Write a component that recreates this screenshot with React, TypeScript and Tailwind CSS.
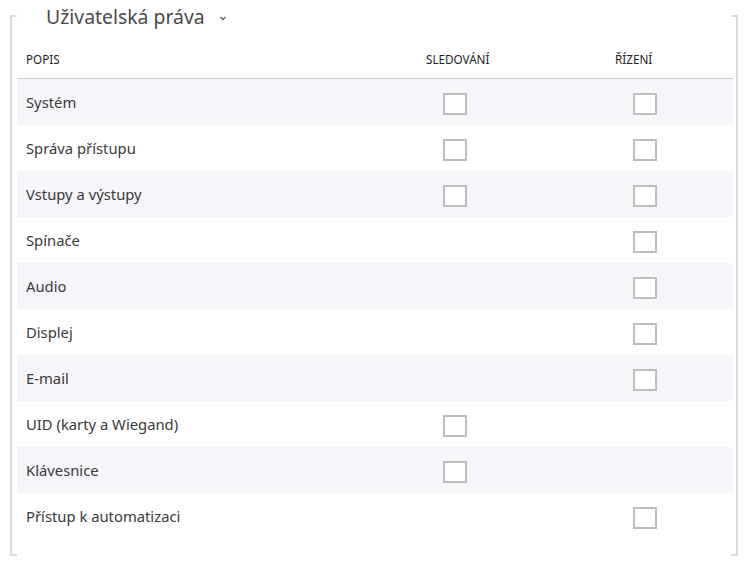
const rows = [
  { label: 'Systém', watch: true, control: true },
  { label: 'Správa přístupu', watch: true, control: true },
  { label: 'Vstupy a výstupy', watch: true, control: true },
  { label: 'Spínače', watch: false, control: true },
  { label: 'Audio', watch: false, control: true },
  { label: 'Displej', watch: false, control: true },
  { label: 'E-mail', watch: false, control: true },
  { label: 'UID (karty a Wiegand)', watch: true, control: false },
  { label: 'Klávesnice', watch: true, control: false },
  { label: 'Přístup k automatizaci', watch: false, control: true },
];

const Box = () => (
  <span className="block w-[24px] h-[22px] border-2 border-[#bdbdbd] bg-white" />
);

export default function App() {
  return (
    <div className="w-[748px] h-[569px] bg-white px-[10px] pt-[15px] font-['Noto_Sans','Open_Sans',sans-serif] text-[#3a3a3a]">
      <div className="relative flow-root h-[541px] w-[728px] border-x-2 border-[#dcdcdc]">
        {/* corner ticks */}
        <div className="absolute -left-[2px] top-0 w-[7px] h-[2px] bg-[#dcdcdc]" />
        <div className="absolute -right-[2px] top-0 w-[7px] h-[2px] bg-[#dcdcdc]" />
        <div className="absolute -left-[2px] bottom-0 w-[7px] h-[2px] bg-[#dcdcdc]" />
        <div className="absolute -right-[2px] bottom-0 w-[7px] h-[2px] bg-[#dcdcdc]" />

        <div className="-mt-[13px] ml-[34px] h-[30px] flex items-center gap-[15px] w-fit">
          <span className="text-[19.4px] leading-none text-[#4a4a4a]">Uživatelská práva</span>
          <svg width="6" height="5" viewBox="0 0 6 5" className="mt-[2px]">
            <path d="M0.5 1 L3 3.5 L5.5 1" fill="none" stroke="#555" strokeWidth="1.2" />
          </svg>
        </div>

        <div className="mt-[10px] ml-[5px] w-[716px]">
          <div className="grid grid-cols-[400px_189px_1fr] h-[37px] items-center border-b border-[#cfcfcf] text-[11.7px] text-[#222] uppercase">
            <span className="px-[9px]">Popis</span>
            <span className="px-[9px]">Sledování</span>
            <span className="px-[9px]">Řízení</span>
          </div>
          {rows.map((r, i) => (
            <div
              key={r.label}
              className={`grid grid-cols-[400px_189px_1fr] h-[46px] items-center text-[14.8px] ${i % 2 === 0 ? 'bg-[#f6f5f9]' : 'bg-white'}`}
            >
              <span className="px-[9px]">{r.label}</span>
              <div className="pl-[26px] pt-[3px]">{r.watch && <Box />}</div>
              <div className="pl-[27px] pt-[3px]">{r.control && <Box />}</div>
            </div>
          ))}
        </div>
      </div>
    </div>
  );
}
